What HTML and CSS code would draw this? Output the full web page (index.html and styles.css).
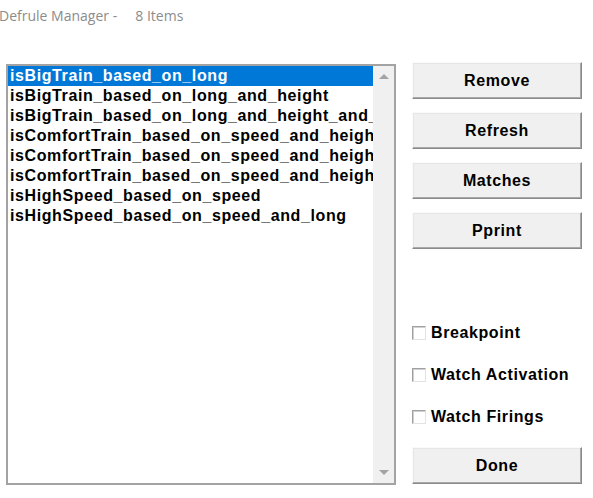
FILE: index.html
```html
<!DOCTYPE html>
<html>
<head>
<meta charset="utf-8">
<link rel="stylesheet" href="styles.css">
</head>
<body>
<div class="window">
  <div class="title">Defrule Manager -&nbsp;&nbsp;&nbsp;&nbsp; 8 Items</div>
  <div class="main">
    <div class="listbox">
      <ul class="items">
        <li class="item selected">isBigTrain_based_on_long</li>
        <li class="item">isBigTrain_based_on_long_and_height</li>
        <li class="item">isBigTrain_based_on_long_and_height_and_long</li>
        <li class="item">isComfortTrain_based_on_speed_and_height</li>
        <li class="item">isComfortTrain_based_on_speed_and_height_2</li>
        <li class="item">isComfortTrain_based_on_speed_and_height_3</li>
        <li class="item">isHighSpeed_based_on_speed</li>
        <li class="item">isHighSpeed_based_on_speed_and_long</li>
      </ul>
      <div class="scrollbar">
        <span class="arrow up"></span>
        <span class="arrow down"></span>
      </div>
    </div>
    <div class="side">
      <div class="buttons">
        <button class="btn">Remove</button>
        <button class="btn">Refresh</button>
        <button class="btn">Matches</button>
        <button class="btn">Pprint</button>
      </div>
      <div class="checks">
        <label class="check"><span class="box"></span>Breakpoint</label>
        <label class="check"><span class="box"></span>Watch Activation</label>
        <label class="check"><span class="box"></span>Watch Firings</label>
      </div>
      <button class="btn done">Done</button>
    </div>
  </div>
</div>
</body>
</html>
```
FILE: styles.css
```css
html, body {
  margin: 0;
  padding: 0;
  background: #ffffff;
}
.window {
  width: 593px;
  height: 498px;
  overflow: hidden;
  font-family: "Liberation Sans", Arial, sans-serif;
}
.title {
  height: 32px;
  padding-top: 6px;
  box-sizing: border-box;
  margin-left: -1px;
  font-family: "Open Sans", "Noto Sans", sans-serif;
  font-size: 14px;
  color: #8c8c8c;
  line-height: 20px;
  white-space: pre;
}
.main {
  display: flex;
  align-items: flex-start;
  padding-left: 6px;
  padding-top: 30px;
}
.listbox {
  width: 390px;
  height: 421px;
  box-sizing: border-box;
  border: 2px solid #a3a3a3;
  display: flex;
  margin-top: 2px;
  background: #fff;
}
.items {
  list-style: none;
  margin: 0;
  padding: 0;
  flex: 1;
  min-width: 0;
  overflow: hidden;
}
.item {
  height: 20px;
  line-height: 19px;
  padding-left: 2px;
  font-size: 16px;
  font-weight: bold;
  letter-spacing: 0.6px;
  white-space: nowrap;
  overflow: hidden;
  color: #000;
}
.item.selected {
  background: #0078d7;
  color: #fff;
}
.scrollbar {
  width: 21px;
  background: #f0f0f0;
  display: flex;
  flex-direction: column;
  justify-content: space-between;
  align-items: center;
  padding: 8px 0 8px;
  box-sizing: border-box;
}
.arrow {
  width: 0;
  height: 0;
  border-left: 5px solid transparent;
  border-right: 5px solid transparent;
}
.arrow.up {
  border-bottom: 5px solid #a3a3a3;
}
.arrow.down {
  border-top: 5px solid #a3a3a3;
}
.side {
  margin-left: 16px;
  width: 170px;
  height: 422px;
  display: flex;
  flex-direction: column;
}
.buttons {
  display: flex;
  flex-direction: column;
  gap: 13px;
}
.btn {
  width: 170px;
  height: 37px;
  box-sizing: border-box;
  background: #f0f0f0;
  border: 1px solid;
  border-color: #fafafa #8a8a8a #8a8a8a #fafafa;
  box-shadow: inset -1px -1px 0 #a9a9a9, inset 1px 1px 0 #e6e6e6;
  font-family: "Liberation Sans", Arial, sans-serif;
  font-size: 16px;
  font-weight: bold;
  letter-spacing: 0.6px;
  color: #000;
  padding: 0;
  margin: 0;
}
.checks {
  display: flex;
  flex-direction: column;
  gap: 22px;
  margin-top: 74px;
}
.check {
  display: flex;
  align-items: center;
  height: 20px;
  font-size: 16px;
  font-weight: bold;
  letter-spacing: 0.6px;
  color: #000;
}
.box {
  width: 14px;
  height: 14px;
  box-sizing: border-box;
  background: #fff;
  border: 1px solid;
  border-color: #a0a0a0 #e3e3e3 #e3e3e3 #a0a0a0;
  box-shadow: inset 1px 1px 0 #d0d0d0;
  margin-right: 5px;
}
.done {
  margin-top: auto;
}
```
